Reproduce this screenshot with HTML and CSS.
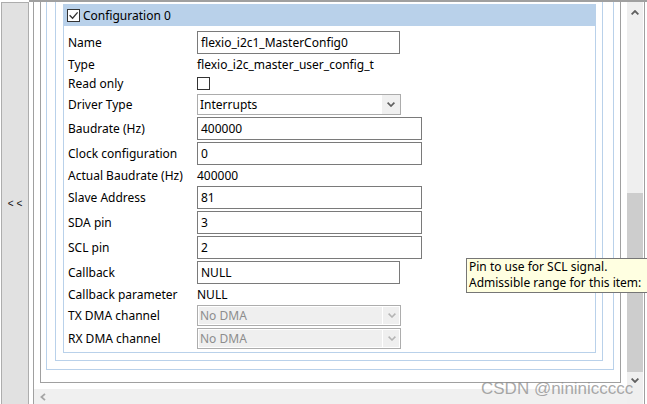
FILE: index.html
```html
<!DOCTYPE html>
<html lang="en">
<head>
<meta charset="utf-8">
<title>Configuration</title>
<link rel="stylesheet" href="styles.css">
</head>
<body>
<div class="app">
  <div class="side"><button class="collapse" type="button">&lt; &lt;</button></div>
  <div class="main">
    <div class="pane">
      <div class="content">
        <div class="scroller">
          <div class="frame-outer">
            <div class="frame-1">
              <div class="frame-2">
                <section class="config">
                  <div class="config-head">
                    <svg class="cb" width="13" height="13" viewBox="0 0 13 13"><rect x="0.5" y="0.5" width="12" height="12" fill="#fff" stroke="#333"/><path d="M2.6 6.2 L5.6 9.2 L10.6 3.4" fill="none" stroke="#333" stroke-width="1.3"/></svg>
                    <span class="head-title">Configuration 0</span>
                  </div>
                  <div class="config-body">
                    <div class="lbl">Name</div>
                    <div class="field short">flexio_i2c1_MasterConfig0</div>

                    <div class="lbl">Type</div>
                    <div class="txt">flexio_i2c_master_user_config_t</div>

                    <div class="lbl">Read only</div>
                    <div><svg class="cb" width="13" height="13" viewBox="0 0 13 13"><rect x="0.5" y="0.5" width="12" height="12" fill="#fff" stroke="#333"/></svg></div>

                    <div class="lbl">Driver Type</div>
                    <div class="select"><span class="val">Interrupts</span><span class="arrow"><svg width="8" height="5" viewBox="0 0 8 5"><polyline points="0.6,0.6 4,4 7.4,0.6" fill="none" stroke="#606060" stroke-width="1.7"/></svg></span></div>

                    <div class="lbl">Baudrate (Hz)</div>
                    <div class="field">400000</div>

                    <div class="lbl">Clock configuration</div>
                    <div class="field">0</div>

                    <div class="lbl">Actual Baudrate (Hz)</div>
                    <div class="txt">400000</div>

                    <div class="lbl">Slave Address</div>
                    <div class="field">81</div>

                    <div class="lbl">SDA pin</div>
                    <div class="field">3</div>

                    <div class="lbl">SCL pin</div>
                    <div class="field">2</div>

                    <div class="lbl">Callback</div>
                    <div class="field short">NULL</div>

                    <div class="lbl">Callback parameter</div>
                    <div class="txt">NULL</div>

                    <div class="lbl">TX DMA channel</div>
                    <div class="select disabled"><span class="val">No DMA</span><span class="arrow"><svg width="8" height="5" viewBox="0 0 8 5"><polyline points="0.6,0.6 4,4 7.4,0.6" fill="none" stroke="#b4b4b4" stroke-width="1.5"/></svg></span></div>

                    <div class="lbl">RX DMA channel</div>
                    <div class="select disabled"><span class="val">No DMA</span><span class="arrow"><svg width="8" height="5" viewBox="0 0 8 5"><polyline points="0.6,0.6 4,4 7.4,0.6" fill="none" stroke="#b4b4b4" stroke-width="1.5"/></svg></span></div>
                  </div>
                </section>
              </div>
            </div>
          </div>
        </div>
        <div class="hscroll"><svg width="6" height="8" viewBox="0 0 6 8"><polyline points="5,0.8 1.4,4 5,7.2" fill="none" stroke="#a6a6a6" stroke-width="1.8"/></svg></div>
      </div>
      <div class="vscroll">
        <div class="sb-btn up"><svg width="8" height="5" viewBox="0 0 8 5"><polyline points="0.6,4.4 4,1 7.4,4.4" fill="none" stroke="#606060" stroke-width="1.8"/></svg></div>
        <div class="sb-gap"></div>
        <div class="thumb"></div>
        <div class="sb-btn down"><svg width="8" height="5" viewBox="0 0 8 5"><polyline points="0.6,0.6 4,4 7.4,0.6" fill="none" stroke="#606060" stroke-width="1.8"/></svg></div>
      </div>
      <div class="gap1"></div>
      <div class="edge"></div>
    </div>
  </div>
</div>
<div class="tooltip">Pin to use for SCL signal.<br>Admissible range for this item:</div>
<div class="watermark">CSDN @nininiccccc</div>
</body>
</html>
```

FILE: styles.css
```css
* { box-sizing: border-box; }
html, body { margin: 0; padding: 0; }
body {
  width: 647px;
  height: 404px;
  overflow: hidden;
  position: relative;
  background: #fff;
  color: #000;
  font-family: "Noto Sans", "Open Sans", sans-serif;
  font-size: 12px;
}
.app { display: flex; height: 404px; }

.side { width: 29px; padding: 2px 0 0 1px; overflow: hidden; }
.collapse {
  display: block;
  width: 28px;
  height: 404px;
  margin: 0;
  padding: 0;
  border: 1px solid #adadad;
  background: #e1e1e1;
  color: #111;
  font: 10px "Liberation Sans", Arial, sans-serif;
  line-height: 10px;
}

.main {
  flex: 1;
  min-width: 0;
  border-top: 2px solid #a0a0a0;
  padding-left: 4px;
  display: flex;
}
.pane { flex: 1; display: flex; border-left: 1px solid #a0a0a0; }
.content { width: 593px; display: flex; flex-direction: column; }
.scroller { flex: 1; overflow: hidden; padding: 0 6px; }
.hscroll {
  height: 15px;
  background: #f0f0f0;
  display: flex;
  align-items: center;
  padding-left: 6px;
}

.vscroll { width: 16px; background: #efefef; display: flex; flex-direction: column; }
.sb-btn { display: flex; align-items: center; justify-content: center; }
.sb-btn.up { height: 20px; }
.sb-gap { height: 171px; }
.thumb { height: 179px; background: #cdcdcd; }
.sb-btn.down { height: 16px; }
.gap1 { width: 1px; }
.edge { width: 1px; background: #a0a0a0; }

.frame-outer {
  border: 1px solid #a0a0a0;
  border-top: 0;
  padding: 0 6px 12px 5px;
}
.frame-1 {
  border: 1px solid #b9d1ea;
  border-top: 0;
  padding: 0 10px 8px 8px;
}
.frame-2 {
  border: 1px solid #b9d1ea;
  border-top: 0;
  padding: 2px 6px 7px 7px;
}
.config { border: 1px solid #b9d1ea; }
.config-head {
  height: 21px;
  background: #b9d1ea;
  display: flex;
  align-items: center;
  gap: 3px;
  padding-left: 3px;
}
.cb { display: block; }
.head-title { line-height: 16px; }

.config-body {
  display: grid;
  grid-template-columns: 129px 1fr;
  grid-template-rows: 25px 19px 19px 23px 25px 25px 19px 25px 25px 25px 25px 19px 23px 23px;
  align-items: center;
  padding: 4px 0 2px 4px;
}
.lbl, .txt { line-height: 16px; white-space: nowrap; }

.field {
  width: 225px;
  height: 23px;
  border: 1px solid #7a7a7a;
  padding: 0 3px;
  display: flex;
  align-items: center;
  white-space: nowrap;
}
.field.short { width: 203px; }

.select {
  width: 204px;
  height: 21px;
  border: 1px solid #acacac;
  background: #fff;
  display: flex;
}
.select .val { flex: 1; display: flex; align-items: center; padding-left: 2px; }
.select .arrow {
  width: 18px;
  background: #f0f0f0;
  display: flex;
  align-items: center;
  justify-content: center;
}
.select.disabled {
  background: #efefef;
  border-color: #adadad;
  box-shadow: inset 0 0 0 1px #fff;
  color: #8d8d8d;
}
.select.disabled .arrow { background: transparent; border-left: 1px solid #fff; }

.tooltip {
  position: absolute;
  left: 466px;
  top: 258px;
  width: 200px;
  height: 35px;
  border: 1px solid #767676;
  background: #ffffe1;
  padding: 0 2px;
  line-height: 16px;
  white-space: nowrap;
}
.watermark {
  position: absolute;
  left: 481px;
  top: 380px;
  font: 17px/17px "Liberation Sans", Arial, sans-serif;
  color: rgba(140, 140, 140, 0.75);
  white-space: nowrap;
}
```
